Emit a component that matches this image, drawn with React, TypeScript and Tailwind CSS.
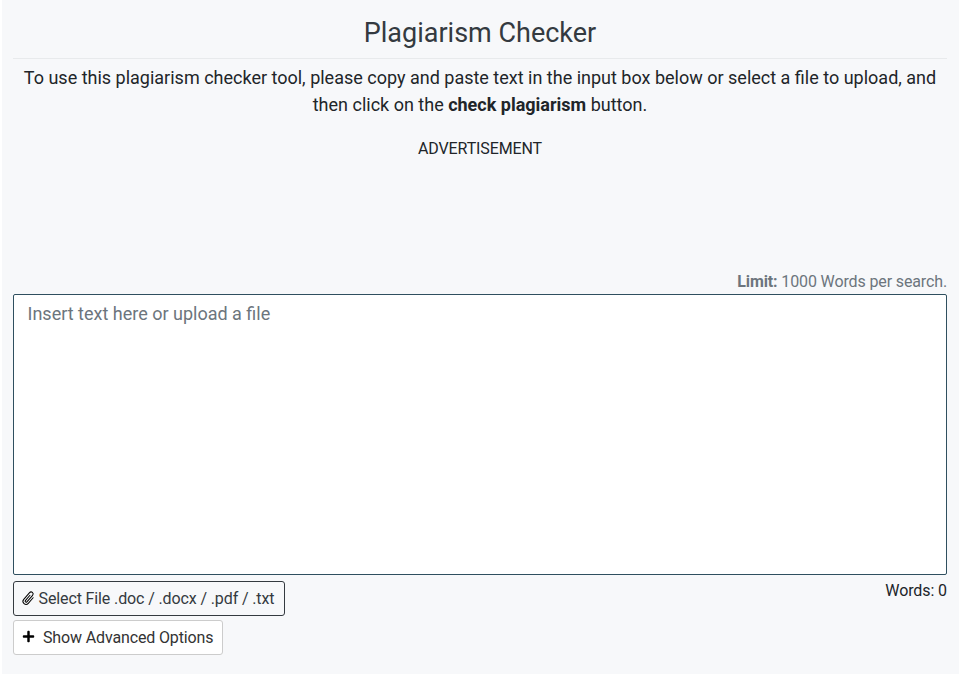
import { useState } from 'react'
import { FaPlus } from 'react-icons/fa'

const WORD_LIMIT = 1000

function PaperclipIcon({ className }: { className?: string }) {
  return (
    <svg
      className={className}
      viewBox="0 0 14 14"
      fill="none"
      stroke="currentColor"
      strokeWidth="1"
      strokeLinecap="round"
      overflow="visible"
    >
      <path
        transform="translate(-0.5 -0.5) rotate(41 7 7)"
        d="M10 3.4v7.4a3 3 0 0 1-6 0V1.9a2 2 0 0 1 4 0v8.7a1 1 0 0 1-2 0V3.6"
      />
    </svg>
  )
}

export default function App() {
  const [text, setText] = useState('')
  const wordCount = text.split(/\s+/).filter(Boolean).length

  return (
    <div className="h-[674px] bg-white px-[2px] font-['Roboto',sans-serif] text-[#212529]">
      <main className="flex h-full flex-col bg-[#f7f8fa] pr-[12px] pl-[11px]">
        <h1 className="h-[59px] border-b border-[#e8eaec] pt-[17px] text-center text-[27px] leading-[32px] text-[#343a40]">
          Plagiarism Checker
        </h1>
        <p className="pt-[5px] text-center text-[18px] leading-[27px]">
          To use this plagiarism checker tool, please copy and paste text in the input box below or
          select a file to upload, and then click on the{' '}
          <b className="font-bold">check plagiarism</b> button.
        </p>
        <div className="h-[152px] pt-[19px] text-center text-[16px] leading-[24px] tracking-[-0.12px]">
          ADVERTISEMENT
        </div>
        <div className="text-right text-[16px] leading-[24px] tracking-[-0.13px] text-[#6c757d]">
          <b>Limit:</b> {WORD_LIMIT} Words per search.
        </div>
        <textarea
          className="block h-[281px] w-full shrink-0 resize-none rounded-[2px] border border-[#2f4f5f] bg-white px-[13.5px] py-[5px] text-[18px] leading-[27px] outline-none placeholder:text-[#6c757d]"
          placeholder="Insert text here or upload a file"
          value={text}
          onChange={(e) => setText(e.target.value)}
        />
        <div className="flex justify-between pt-[6px]">
          <button className="flex h-[35px] w-[272px] items-center rounded-[3px] border border-[#343a40] pl-[8px] text-[16px] tracking-[-0.12px] whitespace-nowrap text-[#343a40]">
            <PaperclipIcon className="mr-[2.5px] size-[14px] text-black" />
            Select File .doc / .docx / .pdf / .txt
          </button>
          <span className="text-[16px] leading-[19px] tracking-[-0.1px]">Words: {wordCount}</span>
        </div>
        <button className="mt-[4px] flex h-[35px] w-[210px] shrink-0 items-center rounded-[3px] border border-[#ccc] bg-white pl-[8px] text-[16px] tracking-[-0.14px] text-[#333]">
          <FaPlus className="mr-[8px] mb-[2px] size-[13px] text-black" />
          Show Advanced Options
        </button>
      </main>
    </div>
  )
}
